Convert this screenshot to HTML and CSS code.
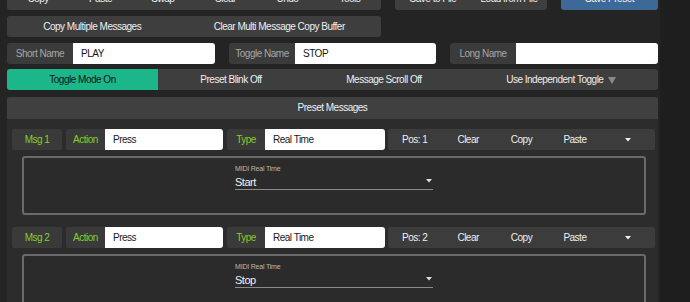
FILE: index.html
```html
<!DOCTYPE html>
<html>
<head>
<meta charset="utf-8">
<link rel="stylesheet" href="styles.css">
</head>
<body>
<div class="app">
  <div class="top">
    <div class="left-col">
      <div class="bar bar-top">
        <span>Copy</span><span>Paste</span><span>Swap</span><span>Clear</span><span>Undo</span><span>Tools</span>
      </div>
      <div class="bar bar-2">
        <span>Copy Multiple Messages</span><span>Clear Multi Message Copy Buffer</span>
      </div>
    </div>
    <div class="bar bar-top mid"><span>Save to File</span><span>Load from File</span></div>
    <div class="save">Save Preset</div>
  </div>

  <div class="names">
    <div class="name-grp"><div class="lbl">Short Name</div><div class="inp">PLAY</div></div>
    <div class="name-grp"><div class="lbl">Toggle Name</div><div class="inp">STOP</div></div>
    <div class="name-grp"><div class="lbl">Long Name</div><div class="inp"></div></div>
  </div>

  <div class="modes">
    <span class="on">Toggle Mode On</span>
    <span>Preset Blink Off</span>
    <span>Message Scroll Off</span>
    <span>Use Independent Toggle <svg class="tri" width="8" height="7" viewBox="0 0 8 7"><path d="M0 0H8L4 7Z" fill="#8a8a8a"/></svg></span>
  </div>

  <div class="header">Preset Messages</div>
  <div class="panel">
    <div class="msg">
      <div class="msg-row">
        <div class="tag num">Msg 1</div>
        <div class="grp"><div class="tag act">Action</div><div class="field-inp act-inp">Press</div></div>
        <div class="grp type-grp"><div class="tag typ">Type</div><div class="field-inp typ-inp">Real Time</div></div>
        <div class="tools"><span>Pos: 1</span><span>Clear</span><span>Copy</span><span>Paste</span><span><svg width="6" height="4" viewBox="0 0 6 4"><path d="M0 0H6L3 3.5Z" fill="#eee"/></svg></span></div>
      </div>
      <div class="sub">
        <div class="field">
          <div class="field-label">MIDI Real Time</div>
          <div class="select"><span>Start</span><svg width="6" height="4" viewBox="0 0 6 4"><path d="M0 0H6L3 3.5Z" fill="#ddd"/></svg></div>
        </div>
      </div>
    </div>
    <div class="msg">
      <div class="msg-row">
        <div class="tag num">Msg 2</div>
        <div class="grp"><div class="tag act">Action</div><div class="field-inp act-inp">Press</div></div>
        <div class="grp type-grp"><div class="tag typ">Type</div><div class="field-inp typ-inp">Real Time</div></div>
        <div class="tools"><span>Pos: 2</span><span>Clear</span><span>Copy</span><span>Paste</span><span><svg width="6" height="4" viewBox="0 0 6 4"><path d="M0 0H6L3 3.5Z" fill="#eee"/></svg></span></div>
      </div>
      <div class="sub">
        <div class="field">
          <div class="field-label">MIDI Real Time</div>
          <div class="select"><span>Stop</span><svg width="6" height="4" viewBox="0 0 6 4"><path d="M0 0H6L3 3.5Z" fill="#ddd"/></svg></div>
        </div>
      </div>
    </div>
  </div>
</div>
</body>
</html>
```
FILE: styles.css
```css
html, body {
  margin: 0;
  padding: 0;
  background: #1e1e1e;
  overflow: hidden;
}
body {
  font-family: "Liberation Sans", Arial, sans-serif;
  font-size: 10px;
  letter-spacing: -0.5px;
  color: #efefef;
}
.app {
  width: 651px;
  padding: 0 2px 0 7px;
  margin-top: -12px;
  min-height: 330px;
  background: #242424;
}
.top {
  display: grid;
  grid-template-columns: 374px 152px 97px;
  column-gap: 14px;
  align-items: start;
}
.left-col {
  display: flex;
  flex-direction: column;
  gap: 6px;
}
.bar {
  display: flex;
  background: #3e3e3e;
  border-radius: 3px;
}
.bar > span {
  flex: 1 1 auto;
  text-align: center;
}
.bar-top { height: 22px; line-height: 22px; }
.bar-2 { height: 21px; line-height: 21px; }
.bar-top > span { flex: 1 1 0; }
.save {
  height: 22px;
  line-height: 22px;
  text-align: center;
  background: #3c6997;
  border-radius: 3px;
  color: #f4f4f4;
}
.names {
  display: grid;
  grid-template-columns: 208px 207px 208px;
  column-gap: 14px;
  margin-top: 6px;
}
.name-grp {
  display: flex;
  height: 21px;
}
.lbl {
  width: 66px;
  flex: none;
  background: #3b3b3b;
  color: #a6a6a6;
  text-align: center;
  line-height: 21px;
  border-radius: 3px 0 0 3px;
}
.inp {
  flex: 1;
  background: #fff;
  color: #151515;
  padding-left: 8px;
  line-height: 21px;
  border-radius: 0 3px 3px 0;
}
.modes {
  display: flex;
  height: 21px;
  margin-top: 5px;
  background: #3e3e3e;
  border-radius: 3px;
}
.modes > span {
  flex: 1 1 auto;
  text-align: center;
  line-height: 21px;
}
.modes .on {
  background: #1bb78a;
  color: #141414;
  border-radius: 3px 0 0 3px;
}
.tri {
  vertical-align: -1px;
  margin-left: 2px;
}
.header {
  margin-top: 7px;
  height: 22px;
  line-height: 22px;
  text-align: center;
  background: #404040;
  border-radius: 3px 3px 0 0;
}
.panel {
  background: #2c2c2c;
  padding: 10px 3px 20px 5px;
}
.msg + .msg {
  margin-top: 12px;
}
.msg-row {
  display: flex;
  height: 21px;
}
.tag {
  background: #3a3a3a;
  color: #80d128;
  text-align: center;
  line-height: 21px;
  flex: none;
}
.num {
  width: 50px;
  margin-right: 4px;
  border-radius: 2px;
}
.grp {
  display: flex;
  margin-right: 4px;
}
.grp .tag { border-radius: 2px 0 0 2px; }
.act { width: 39px; }
.typ { width: 38px; }
.type-grp { margin-right: 3px; }
.field-inp {
  background: #fff;
  color: #1a1a1a;
  padding-left: 8px;
  line-height: 21px;
  box-sizing: border-box;
  border-radius: 0 3px 3px 0;
}
.act-inp { width: 118px; }
.typ-inp { width: 120px; }
.tools {
  flex: 1;
  display: flex;
  background: #3c3c3c;
  border-radius: 2px;
}
.tools > span {
  flex: 1 1 0;
  text-align: center;
  line-height: 21px;
}
.tools svg { vertical-align: 1px; }
.sub {
  margin: 6px 9px 0 10px;
  height: 59px;
  box-sizing: border-box;
  border: 2px solid #6a6a6a;
  border-radius: 3px;
  padding-top: 6px;
  background: #2b2b2b;
}
.field {
  width: 198px;
  margin: 0 auto;
}
.field-label {
  font-size: 7px;
  letter-spacing: -0.2px;
  line-height: 9px;
  color: #b8b8b8;
}
.select {
  margin-top: 2px;
  display: flex;
  justify-content: space-between;
  align-items: center;
  font-size: 11px;
  line-height: 14px;
  color: #f2f2f2;
  border-bottom: 1px solid #8a8a8a;
  padding-right: 1px;
}
.select svg { margin-bottom: 3px; }
```
